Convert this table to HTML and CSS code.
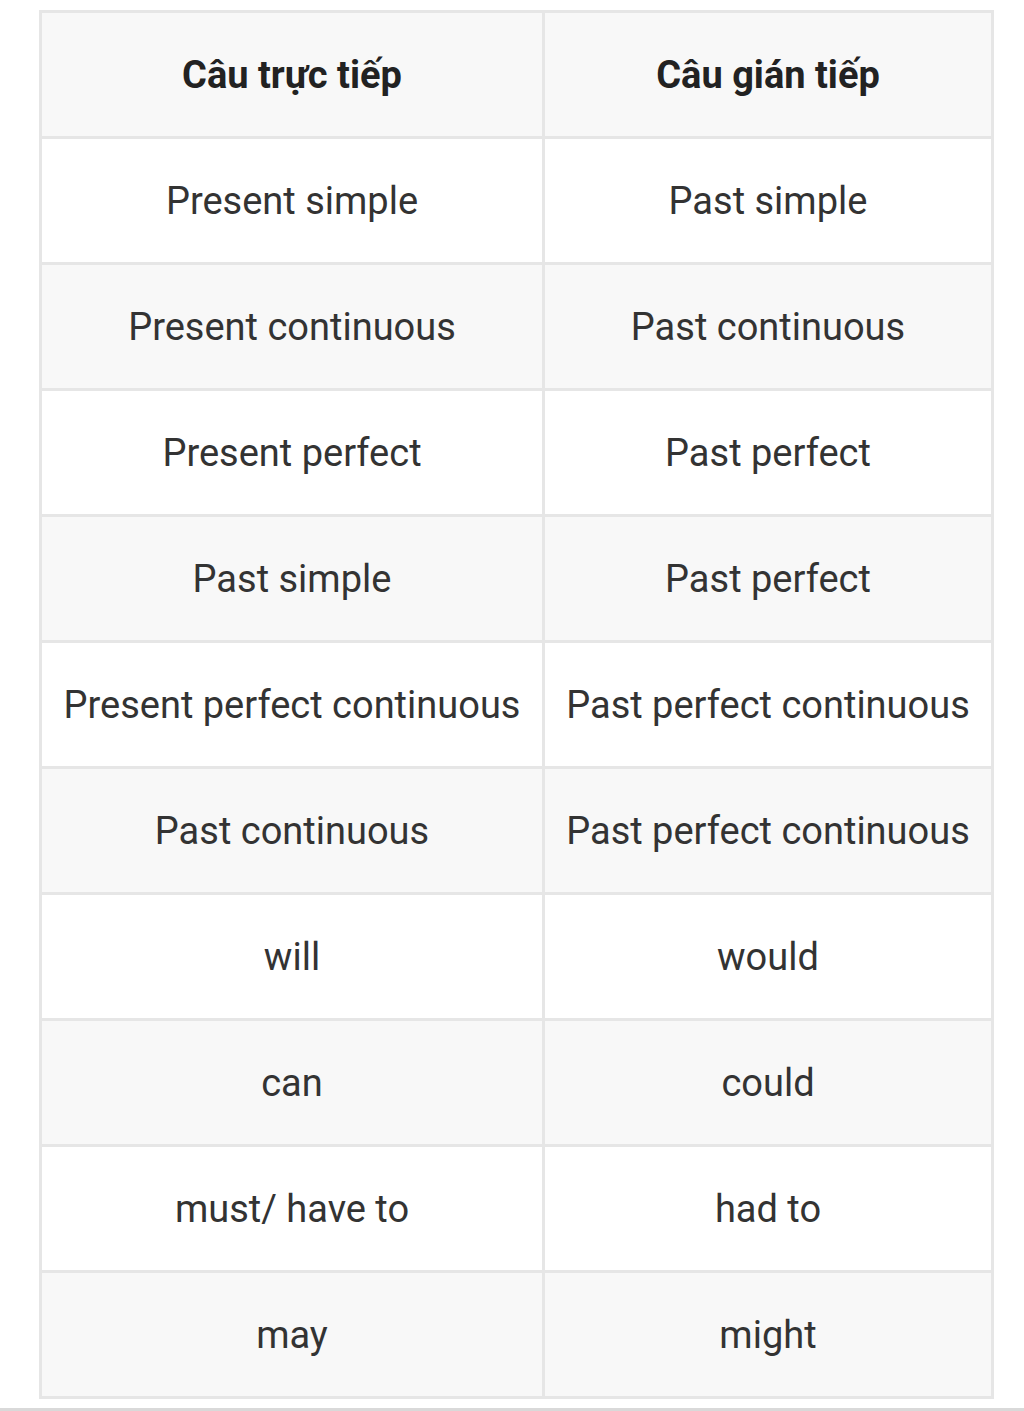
FILE: index.html
```html
<!DOCTYPE html>
<html lang="vi">
<head>
<meta charset="utf-8">
<link rel="stylesheet" href="styles.css">
</head>
<body>
<div class="page">
  <table class="tenses">
    <colgroup><col class="c1"><col class="c2"></colgroup>
    <thead>
      <tr><th>Câu trực tiếp</th><th>Câu gián tiếp</th></tr>
    </thead>
    <tbody>
      <tr><td>Present simple</td><td>Past simple</td></tr>
      <tr><td>Present continuous</td><td>Past continuous</td></tr>
      <tr><td>Present perfect</td><td>Past perfect</td></tr>
      <tr><td>Past simple</td><td>Past perfect</td></tr>
      <tr><td>Present perfect continuous</td><td>Past perfect continuous</td></tr>
      <tr><td>Past continuous</td><td>Past perfect continuous</td></tr>
      <tr><td>will</td><td>would</td></tr>
      <tr><td>can</td><td>could</td></tr>
      <tr><td>must/ have to</td><td>had to</td></tr>
      <tr><td>may</td><td>might</td></tr>
    </tbody>
  </table>
  <div class="band"></div>
</div>
</body>
</html>
```

FILE: styles.css
```css
html, body {
  margin: 0;
  padding: 0;
  background: #ffffff;
}
.page {
  width: 1024px;
  height: 1411px;
  padding-top: 10px;
  box-sizing: border-box;
  display: flex;
  flex-direction: column;
  overflow: hidden;
}
.tenses {
  margin-left: 39px;
  width: 952px;
  border-collapse: collapse;
  table-layout: fixed;
  font-family: Roboto, "Noto Sans", sans-serif;
  font-size: 38px;
  color: #333333;
}
.c1 { width: 503px; }
.c2 { width: 449px; }
.tenses th,
.tenses td {
  border: 3px solid #e6e6e6;
  height: 123px;
  padding: 0;
  text-align: center;
  vertical-align: middle;
  white-space: nowrap;
}
.tenses th {
  font-weight: 700;
  color: #222222;
  background: #f8f8f8;
}
.tenses tbody tr:nth-child(even) td {
  background: #f8f8f8;
}
.tenses tbody tr:nth-child(odd) td {
  background: #ffffff;
}
.band {
  margin-top: auto;
  height: 3px;
  background: #d9d9d9;
  flex: none;
}
```
